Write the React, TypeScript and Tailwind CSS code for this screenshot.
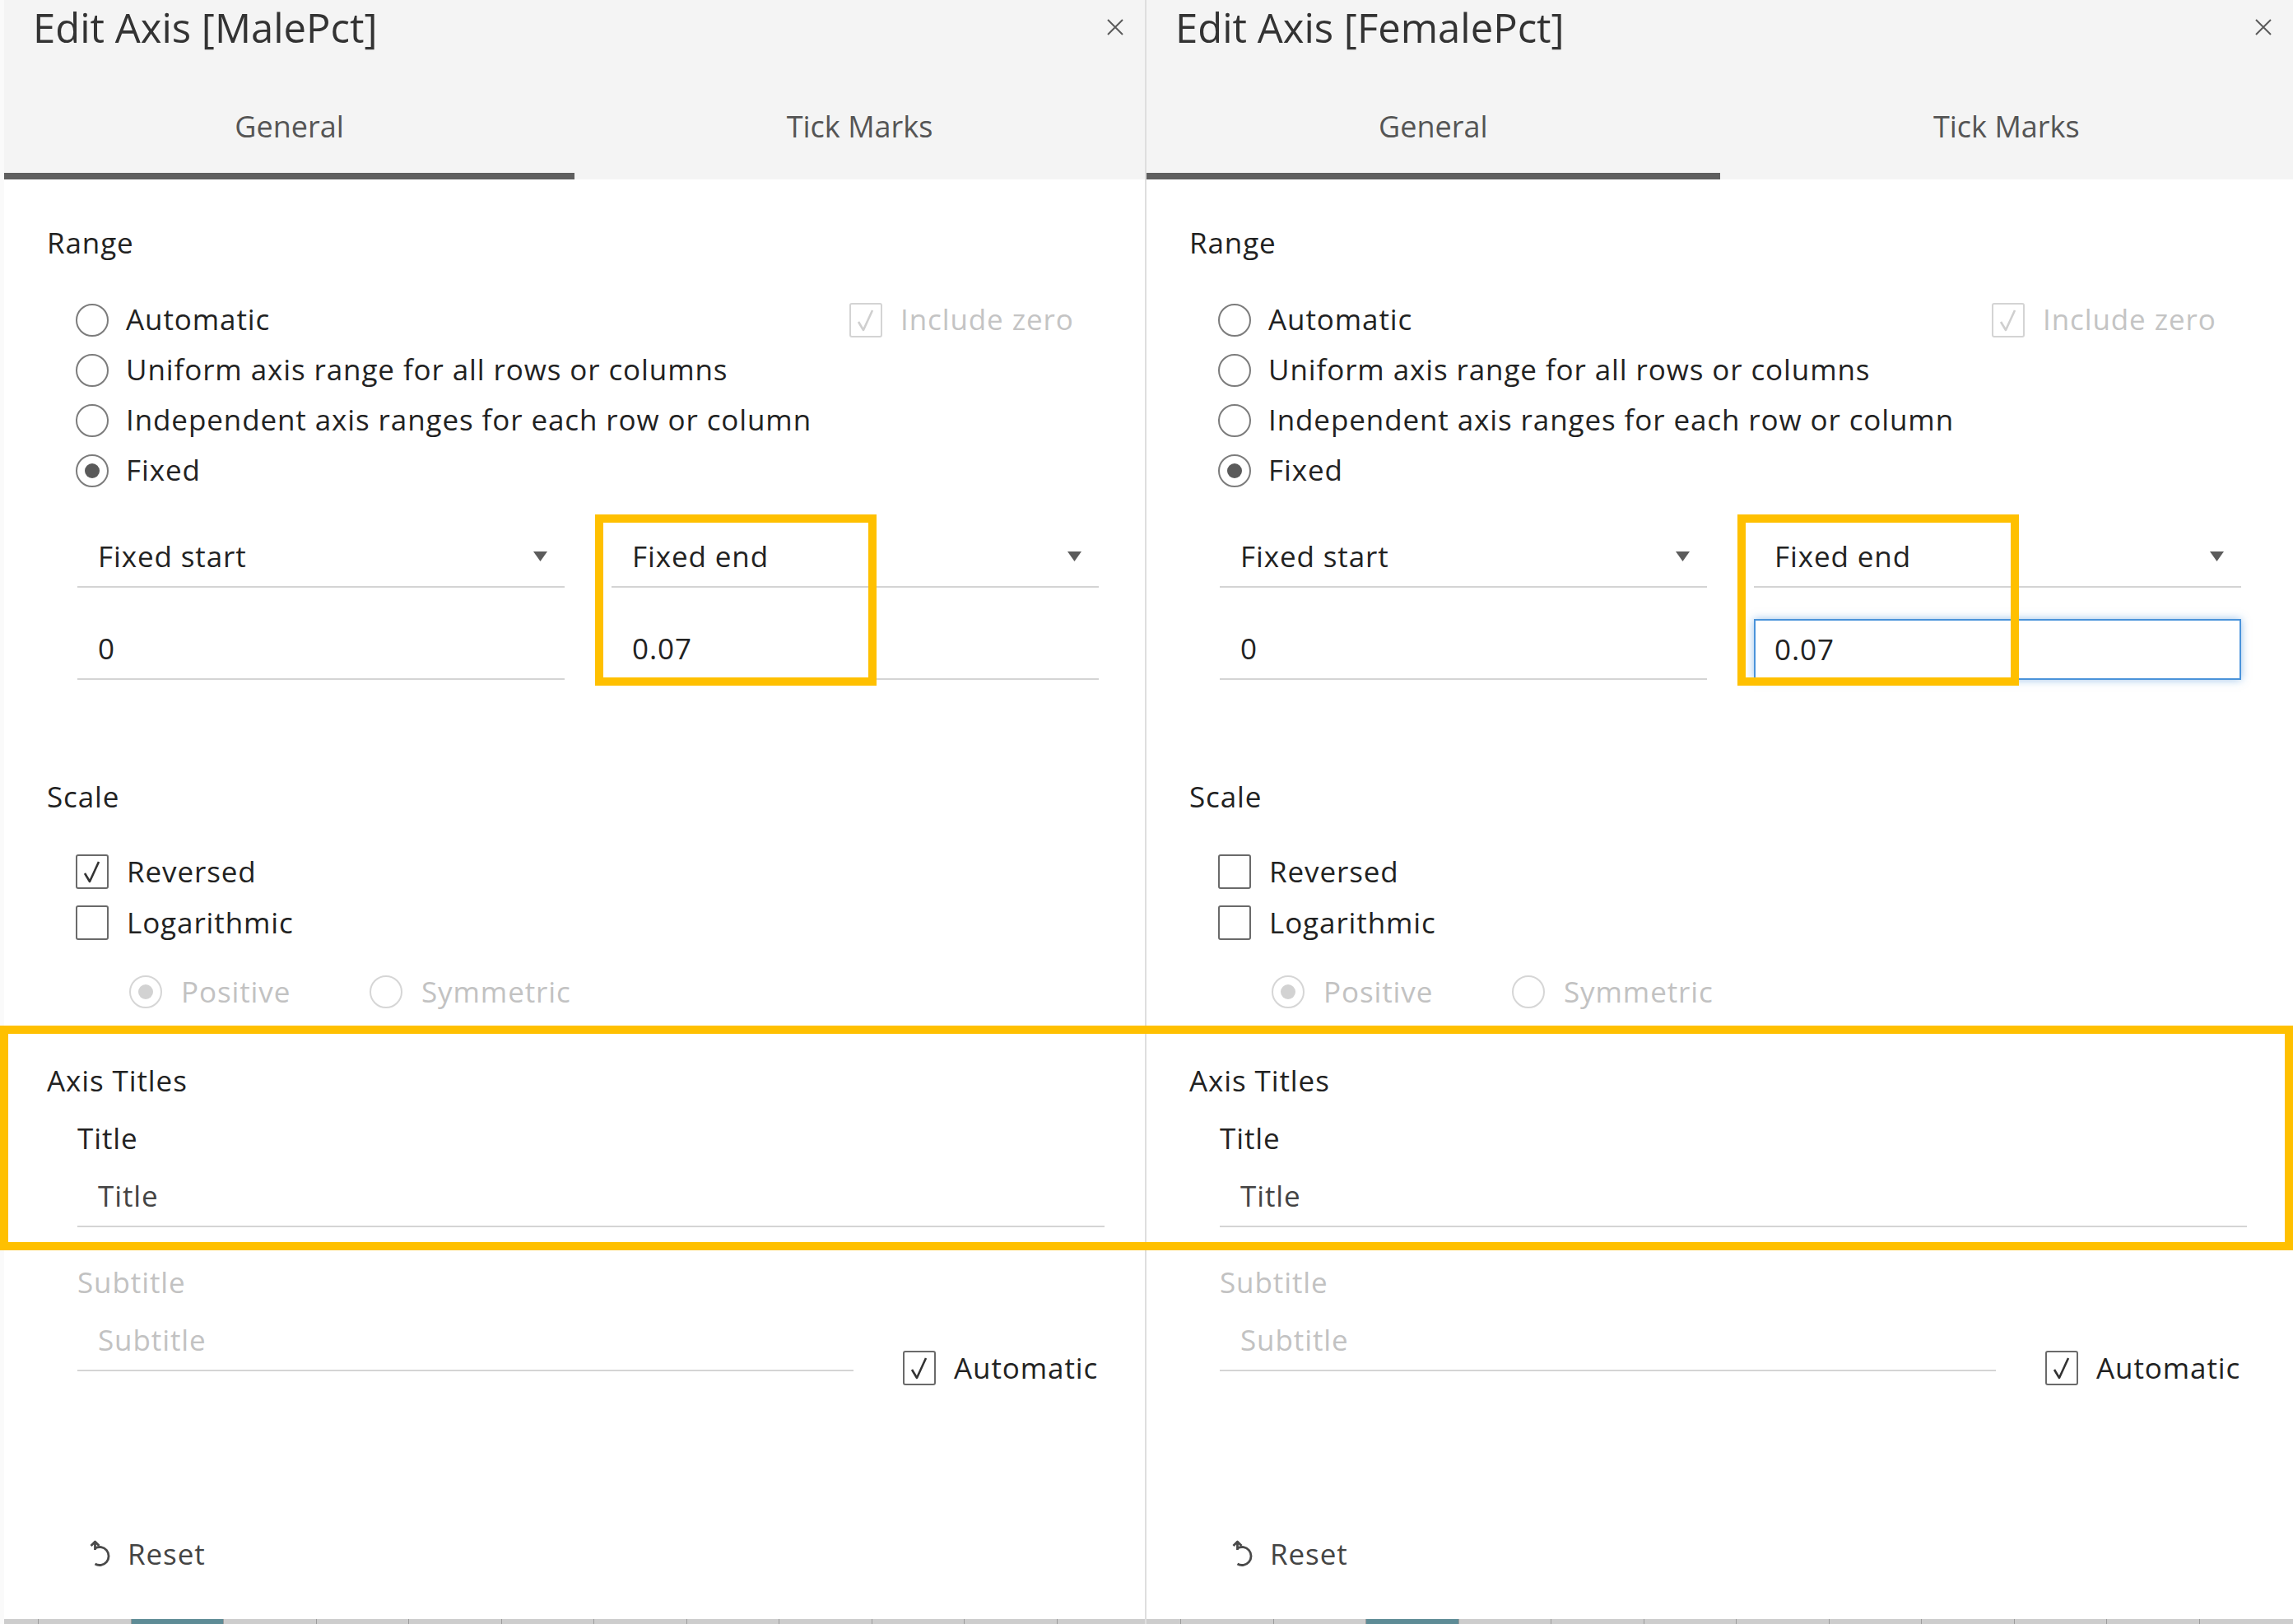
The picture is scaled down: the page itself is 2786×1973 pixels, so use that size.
import React from 'react'

const Radio = ({ checked = false, disabled = false }: { checked?: boolean; disabled?: boolean }) => (
  <span
    className={
      'flex h-[40px] w-[40px] shrink-0 items-center justify-center rounded-full border-2 bg-white ' +
      (disabled ? 'border-[#d6d6d6]' : 'border-[#7c7c7c]')
    }
  >
    {checked && <span className={'h-[18px] w-[18px] rounded-full ' + (disabled ? 'bg-[#d2d2d2]' : 'bg-[#5a5a5a]')} />}
  </span>
)

const Checkbox = ({ checked = false, disabled = false }: { checked?: boolean; disabled?: boolean }) => (
  <span
    className={
      'flex h-[42px] w-[40px] shrink-0 items-center justify-center rounded-[3px] border-2 bg-white ' +
      (disabled ? 'border-[#d4d4d4]' : 'border-[#6a6a6a]')
    }
  >
    {checked && (
      <svg width="30" height="32" viewBox="0 0 30 32">
        <polyline
          points="6,18 12,28 23,4"
          fill="none"
          stroke={disabled ? '#cfcfcf' : '#333'}
          strokeWidth="2.6"
          strokeLinejoin="round"
        />
      </svg>
    )}
  </span>
)

const Arrow = () => (
  <svg width="17" height="12" viewBox="0 0 17 12">
    <polygon points="0,0 17,0 8.5,12" fill="#5c5c5c" />
  </svg>
)

const Strip = ({ active }: { active: number }) => (
  <div className="flex h-[6px] shrink-0 bg-[#cdcdcd] pl-[41px]">
    {Array.from({ length: 12 }).map((_, i) => (
      <div
        key={i}
        className={'h-full w-[112.5px] shrink-0 border-l border-[#9c9c9c] ' + (i === active ? 'bg-[#5e8c96]' : '')}
      />
    ))}
  </div>
)

type PanelProps = {
  title: string
  width: string
  reversed: boolean
  focused: boolean
  strip: number
}

const Panel = ({ title, width, reversed, focused, strip }: PanelProps) => {
  return (
    <div className={width + ' flex h-full shrink-0 flex-col'}>
      {/* header */}
      <div className="bg-[#f4f4f4]">
        <div className="flex h-[97px] items-start">
          <div className="pl-[35px] text-[49px] leading-[67px] text-[#333]">{title}</div>
          <svg className="ml-auto mr-[24px] mt-[22px]" width="24" height="22" viewBox="0 0 24 22">
            <path d="M3 2 L21 20 M21 2 L3 20" stroke="#5a5a5a" strokeWidth="2" />
          </svg>
        </div>
        <div className="flex">
          <div className="flex-1">
            <div className="flex h-[113px] items-center justify-center text-[36px] text-[#555]">General</div>
            <div className="h-[8px] bg-[#5f5f5f]" />
          </div>
          <div className="flex-1">
            <div className="flex h-[113px] items-center justify-center text-[36px] text-[#555]">Tick Marks</div>
            <div className="h-[8px]" />
          </div>
        </div>
      </div>

      {/* body */}
      <div className="flex flex-1 flex-col pt-[57px] text-[35px] tracking-[0.9px] text-[#222]">
        <div className="flex h-[40px] items-center pl-[52px]">Range</div>

        <div className="mt-[43px] flex flex-col pl-[87px]">
          <div className="flex h-[61px] items-center">
            <div className="flex w-[940px] items-center gap-[21px]">
              <Radio />
              <span>Automatic</span>
            </div>
            <div className="flex items-center gap-[22px] text-[#c4c4c4]">
              <Checkbox checked disabled />
              <span>Include zero</span>
            </div>
          </div>
          <div className="flex h-[61px] items-center gap-[21px]">
            <Radio />
            <span>Uniform axis range for all rows or columns</span>
          </div>
          <div className="flex h-[61px] items-center gap-[21px]">
            <Radio />
            <span>Independent axis ranges for each row or column</span>
          </div>
          <div className="flex h-[61px] items-center gap-[21px]">
            <Radio checked />
            <span>Fixed</span>
          </div>
        </div>

        <div className="mt-[38px] flex gap-[57px] pl-[89px]">
          <div className="w-[592px]">
            <div className="flex h-[74px] items-center justify-between border-b-2 border-[#d4d4d4] pl-[25px] pr-[21px]">
              <span>Fixed start</span>
              <Arrow />
            </div>
            <div className="mt-[38px] flex h-[74px] items-center border-b-2 border-[#d4d4d4] pl-[25px]">0</div>
          </div>
          <div className="relative w-[592px]">
            <div className="flex h-[74px] items-center justify-between border-b-2 border-[#d4d4d4] pl-[25px] pr-[21px]">
              <span>Fixed end</span>
              <Arrow />
            </div>
            {focused ? (
              <div className="mt-[38px] flex h-[74px] items-center border-2 border-[#4a93da] pl-[23px] shadow-[0_0_10px_rgba(74,147,218,0.55)]">
                0.07
              </div>
            ) : (
              <div className="mt-[38px] flex h-[74px] items-center border-b-2 border-[#d4d4d4] pl-[25px]">0.07</div>
            )}
            <div className="pointer-events-none absolute left-[-20px] top-[-15px] h-[208px] w-[342px] border-[10px] border-[#ffc000]" />
          </div>
        </div>

        <div className="mt-[122px] flex h-[40px] items-center pl-[52px]">Scale</div>

        <div className="mt-[40px] flex flex-col pl-[87px]">
          <div className="flex h-[62px] items-center gap-[22px]">
            <Checkbox checked={reversed} />
            <span>Reversed</span>
          </div>
          <div className="flex h-[62px] items-center gap-[22px]">
            <Checkbox />
            <span>Logarithmic</span>
          </div>
        </div>

        <div className="mt-[22px] flex h-[62px] items-center pl-[152px] text-[#c2c2c2]">
          <div className="flex w-[292px] items-center gap-[23px]">
            <Radio checked disabled />
            <span>Positive</span>
          </div>
          <div className="flex items-center gap-[23px]">
            <Radio disabled />
            <span>Symmetric</span>
          </div>
        </div>

        <div className="mt-[57px] flex h-[40px] items-center pl-[52px]">Axis Titles</div>
        <div className="mt-[30px] flex h-[40px] items-center pl-[89px]">Title</div>
        <div className="ml-[89px] mt-[14px] flex h-[74px] w-[1248px] items-center border-b-2 border-[#d4d4d4] pl-[25px] text-[#444]">
          Title
        </div>

        <div className="mt-[47px] flex h-[40px] items-center pl-[89px] text-[#c2c2c2]">Subtitle</div>
        <div className="mt-[14px] flex pl-[89px]">
          <div className="flex h-[74px] w-[943px] items-center border-b-2 border-[#d4d4d4] pl-[25px] text-[#c2c2c2]">
            Subtitle
          </div>
          <div className="ml-[60px] mt-[48px] flex h-[44px] items-center gap-[22px]">
            <Checkbox checked />
            <span>Automatic</span>
          </div>
        </div>

        <div className="mt-[184px] flex h-[40px] items-center gap-[18px] pl-[102px] text-[#444]">
          <svg width="30" height="38" viewBox="0 0 30 38">
            <path d="M8.5 12 A11 11 0 1 1 8.5 31" fill="none" stroke="#4a4a4a" strokeWidth="2.8" />
            <path d="M8.5 4 L8.5 14 M3.5 9 L8.5 4 L13.5 9" fill="none" stroke="#4a4a4a" strokeWidth="2.8" strokeLinejoin="round" />
          </svg>
          <span>Reset</span>
        </div>

        <div className="mt-auto">
          <Strip active={strip} />
        </div>
      </div>
    </div>
  )
}

const App = () => {
  return (
    <div className="relative flex h-[1973px] w-[2786px] overflow-hidden bg-white font-['Open_Sans',sans-serif]">
      <div className="w-[5px] shrink-0 bg-[#fafafa]" />
      <Panel title="Edit Axis [MalePct]" width="w-[1386px]" reversed focused={false} strip={1} />
      <div className="w-[2px] shrink-0 bg-[#dedede]" />
      <Panel title="Edit Axis [FemalePct]" width="w-[1393px]" reversed={false} focused strip={2} />
      {/* highlight box over both panels */}
      <div className="pointer-events-none absolute left-0 top-[1246px] h-[273px] w-[2786px] border-[10px] border-[#ffc000]" />
    </div>
  )
}

export default App
